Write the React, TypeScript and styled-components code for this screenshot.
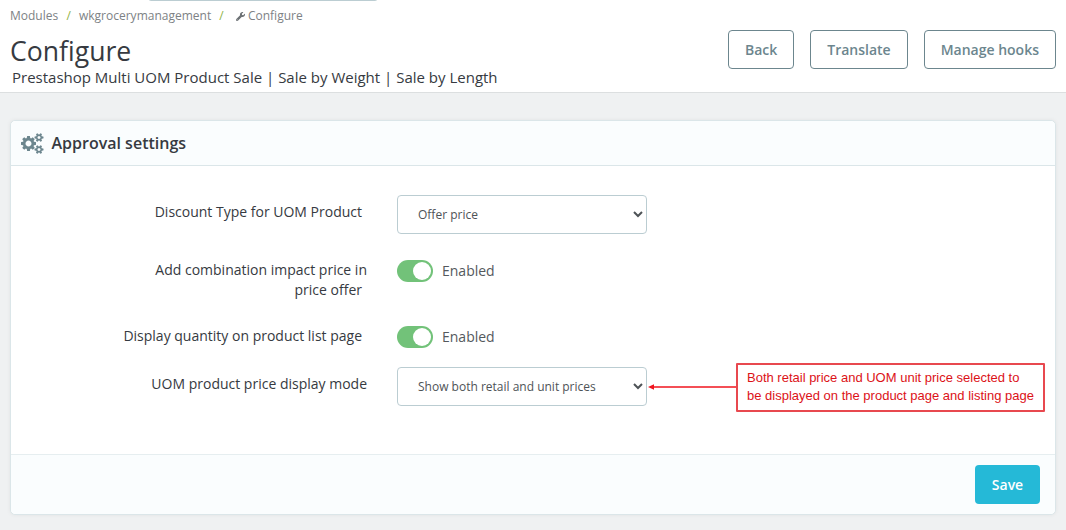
import React, { useState } from "react";

import styled, { createGlobalStyle } from "styled-components";
import { FaWrench } from "react-icons/fa";

const DISCOUNT_TYPES = ["Offer price", "Discount"];

const DISPLAY_MODES = [
  "Show both retail and unit prices",
  "Show retail price",
  "Show unit price",
];

const BIG_GEAR =
  "M896 896q0-106-75-181t-181-75-181 75-75 181 75 181 181 75 181-75 75-181zm384-91v185q0 10-7 19.500t-16 10.500l-155 24q-11 35-32 76 34 48 90 115 7 11 7 20 0 12-7 19-23 30-82.500 89.500t-78.500 59.500q-11 0-21-7l-115-90q-37 19-77 31-11 108-23 155-7 24-30 24h-186q-11 0-20-7.500t-10-17.500l-23-153q-34-10-75-31l-118 89q-7 7-20 7-11 0-21-8-144-133-144-160 0-9 7-19 10-14 41-53t47-61q-23-44-35-82l-152-24q-10-1-17-9.500t-7-19.500v-185q0-10 7-19.500t16-10.500l155-24q11-35 32-76-34-48-90-115-7-11-7-20 0-12 7-20 22-30 82-89t79-59q11 0 21 7l115 90q34-18 77-32 11-108 23-154 7-24 30-24h186q11 0 20 7.500t10 17.500l23 153q34 10 75 31l118-89q8-7 20-7 11 0 21 8 144 133 144 160 0 8-7 19-12 16-42 54t-45 60q23 48 34 82l152 23q10 2 17 10.500t7 19.500z";

const SMALL_GEAR =
  "M1664 1408q0-52-38-90t-90-38-90 38-38 90q0 53 37.500 90.500t90.500 37.500 90.500-37.500 37.500-90.500zM1920 1338v140q0 16-149 31-12 27-30 52 51 113 51 138 0 4-4 7-122 71-124 71-8 0-46-47t-52-68q-20 2-30 2t-30-2q-14 21-52 68t-46 47q-2 0-124-71-4-3-4-7 0-25 51-138-18-25-30-52-149-15-149-31v-140q0-16 149-31 13-29 30-52-51-113-51-138 0-4 4-7 4-2 35-20t59-34 30-16q8 0 46 46.500t52 67.500q20-2 30-2t30 2q51-71 92-112l6-2q4 0 124 70 4 3 4 7 0 25-51 138 17 23 30 52 149 15 149 31z";

type SwitchProps = {
  checked: boolean;
  onToggle: () => void;
};

function Switch({ checked, onToggle }: SwitchProps) {
  return (
    <SwitchWrapper>
      <SwitchTrack
        type="button"
        role="switch"
        aria-checked={checked}
        onClick={onToggle}
        $checked={checked}
      >
        <SwitchKnob />
      </SwitchTrack>
      <SwitchText>{checked ? "Enabled" : "Disabled"}</SwitchText>
    </SwitchWrapper>
  );
}

export default function App() {
  const [discountType, setDiscountType] = useState(DISCOUNT_TYPES[0]);
  const [displayMode, setDisplayMode] = useState(DISPLAY_MODES[0]);
  const [impactPrice, setImpactPrice] = useState(true);
  const [showQuantity, setShowQuantity] = useState(true);

  return (
    <Page>
      <GlobalStyle />
      <Header>
        <SearchEdge />
        <HeaderMain>
          <Breadcrumb>
            <span>Modules</span>
            <Separator>/</Separator>
            <span>wkgrocerymanagement</span>
            <Separator>/</Separator>
            <WrenchIcon />
            <span>Configure</span>
          </Breadcrumb>
          <Title>Configure</Title>
          <Subtitle>
            Prestashop Multi UOM Product Sale | Sale by Weight | Sale by Length
          </Subtitle>
        </HeaderMain>
        <Toolbar>
          <OutlineBtn>Back</OutlineBtn>
          <OutlineBtn>Translate</OutlineBtn>
          <OutlineBtn>Manage hooks</OutlineBtn>
        </Toolbar>
      </Header>

      <Panel>
        <PanelHeader>
          <CogsIcon viewBox="0 0 1920 1792" fill="currentColor">
            <path d={BIG_GEAR} />
            <path d={SMALL_GEAR} />
            <path d={SMALL_GEAR} transform="translate(0 -1024)" />
          </CogsIcon>
          <span>Approval settings</span>
        </PanelHeader>
        <PanelBody>
          <Row $height={65}>
            <Label $top={7} $inset>
              Discount Type for UOM Product
            </Label>
            <Select
              value={discountType}
              onChange={(e) => setDiscountType(e.target.value)}
            >
              {DISCOUNT_TYPES.map((type) => (
                <option key={type}>{type}</option>
              ))}
            </Select>
          </Row>
          <Row $height={66}>
            <Label>
              Add combination impact price in
              <InsetLine>price offer</InsetLine>
            </Label>
            <Switch
              checked={impactPrice}
              onToggle={() => setImpactPrice(!impactPrice)}
            />
          </Row>
          <Row $height={41}>
            <Label $inset>Display quantity on product list page</Label>
            <Switch
              checked={showQuantity}
              onToggle={() => setShowQuantity(!showQuantity)}
            />
          </Row>
          <Row $height={39}>
            <Label $top={7}>UOM product price display mode</Label>
            <Select
              value={displayMode}
              onChange={(e) => setDisplayMode(e.target.value)}
            >
              {DISPLAY_MODES.map((mode) => (
                <option key={mode}>{mode}</option>
              ))}
            </Select>
            <Note>
              <Arrow width="88" height="8" viewBox="0 0 88 8">
                <path d="M0 4L6 1.2V6.8Z" fill="#f0141e" />
                <path d="M5 4H88" stroke="#f0141e" strokeWidth="1.6" />
              </Arrow>
              <NoteBox>
                Both retail price and UOM unit price selected to
                <br />
                be displayed on the product page and listing page
              </NoteBox>
            </Note>
          </Row>
        </PanelBody>
        <PanelFooter>
          <SaveBtn>Save</SaveBtn>
        </PanelFooter>
      </Panel>
    </Page>
  );
}

const GlobalStyle = createGlobalStyle`
  * {
    box-sizing: border-box;
  }

  body {
    margin: 0;
    background: #eff1f2;
    font-family: "Open Sans", "Noto Sans", sans-serif;
    font-size: 14px;
    color: #363a41;
  }

  button, select {
    font-family: inherit;
  }
`;

const Page = styled.div`
  height: 530px;
  overflow: hidden;
`;

const Header = styled.header`
  position: relative;
  display: flex;
  justify-content: space-between;
  height: 93px;
  padding: 0 10px;
  background: #fff;
  border-bottom: 1px solid #dcdfe0;
`;

/* bottom border of the search field scrolled under the top edge */
const SearchEdge = styled.div`
  position: absolute;
  top: -5px;
  left: 148px;
  width: 230px;
  height: 6px;
  border: 1px solid #bbcdd2;
  border-radius: 4px;
`;

const HeaderMain = styled.div`
  display: flex;
  flex-direction: column;
`;

const Breadcrumb = styled.nav`
  display: flex;
  align-items: center;
  height: 16px;
  margin-top: 7px;
  font-size: 12px;
  color: #7d8285;
`;

const Separator = styled.span`
  margin: 0 8.2px;
  color: #8fb347;
`;

const WrenchIcon = styled(FaWrench)`
  width: 9px;
  height: 9px;
  margin: 2px 3px 0 4px;
  color: #6c7174;
`;

const Title = styled.h1`
  margin: 10px 0 0;
  font-size: 26.6px;
  font-weight: 400;
  line-height: 36px;
`;

const Subtitle = styled.h4`
  margin: -2px 0 0 2px;
  font-size: 15px;
  font-weight: 400;
  line-height: 20px;
  white-space: nowrap;
`;

const Toolbar = styled.div`
  display: flex;
  gap: 16px;
  margin-top: 30px;
`;

const OutlineBtn = styled.button`
  height: 39px;
  padding: 0 16px;
  background: #fff;
  border: 1px solid #6c868e;
  border-radius: 4px;
  color: #6c868e;
  font-size: 14px;
  font-weight: 600;
  white-space: nowrap;
`;

const Panel = styled.section`
  display: flex;
  flex-direction: column;
  width: 1046px;
  height: 395px;
  margin: 27px 0 0 10px;
  background: #fff;
  border: 1px solid #dbe6e9;
  border-radius: 5px;
  box-shadow: 0 0 4px rgba(0, 0, 0, 0.06);
`;

const PanelHeader = styled.div`
  display: flex;
  align-items: center;
  height: 45px;
  padding: 0 0 1px 10px;
  background: #fafdfe;
  border-bottom: 1px solid #dbe6e9;
  border-radius: 5px 5px 0 0;
  font-size: 16px;
  font-weight: 600;
`;

const CogsIcon = styled.svg`
  width: 22.5px;
  height: 21px;
  margin: 1px 8px 0 0;
  color: #6c868e;
`;

const PanelBody = styled.div`
  flex: 1;
  padding-top: 29px;
`;

const Row = styled.div<{ $height: number }>`
  display: flex;
  align-items: flex-start;
  height: ${({ $height }) => $height}px;
`;

const Label = styled.label<{ $top?: number; $inset?: boolean }>`
  width: 356px;
  margin-right: 30px;
  padding-top: ${({ $top = 0 }) => $top}px;
  padding-right: ${({ $inset }) => ($inset ? 5 : 0)}px;
  line-height: 20px;
  text-align: right;
`;

const InsetLine = styled.div`
  padding-right: 5px;
`;

const Select = styled.select`
  width: 250px;
  height: 39px;
  padding: 0 0 0 16px;
  background: #fff;
  border: 1px solid #bbcdd2;
  border-radius: 4px;
  color: #4e5357;
  font-size: 12px;
`;

const SwitchWrapper = styled.div`
  display: flex;
  align-items: center;
  gap: 9px;
  height: 22px;
`;

const SwitchTrack = styled.button<{ $checked: boolean }>`
  display: flex;
  justify-content: ${({ $checked }) => ($checked ? "flex-end" : "flex-start")};
  align-items: center;
  width: 36px;
  height: 22px;
  padding: 0 2px;
  background: ${({ $checked }) => ($checked ? "#72c279" : "#b3c7cd")};
  border: none;
  border-radius: 11px;
`;

const SwitchKnob = styled.span`
  width: 18px;
  height: 18px;
  background: #fff;
  border-radius: 50%;
`;

const SwitchText = styled.span`
  padding-bottom: 2px;
  color: #54595d;
`;

const Note = styled.div`
  display: flex;
  align-items: center;
  height: 49px;
  margin: -4px 0 0 1px;
`;

const Arrow = styled.svg`
  margin-top: -2px;
`;

const NoteBox = styled.div`
  width: 309px;
  height: 49px;
  padding: 4px 0 0 9px;
  border: 2px solid #e8484f;
  border-radius: 1px;
  color: #dc1218;
  font-family: "Liberation Sans", Arial, sans-serif;
  font-size: 13px;
  line-height: 18px;
  white-space: nowrap;
`;

const PanelFooter = styled.div`
  display: flex;
  align-items: center;
  justify-content: flex-end;
  height: 60px;
  padding-right: 15px;
  background: #fafdfe;
  border-top: 1px solid #e6eef0;
  border-radius: 0 0 5px 5px;
`;

const SaveBtn = styled.button`
  width: 65px;
  height: 39px;
  background: #25b9d7;
  border: none;
  border-radius: 4px;
  color: #fff;
  font-size: 14px;
  font-weight: 600;
`;
